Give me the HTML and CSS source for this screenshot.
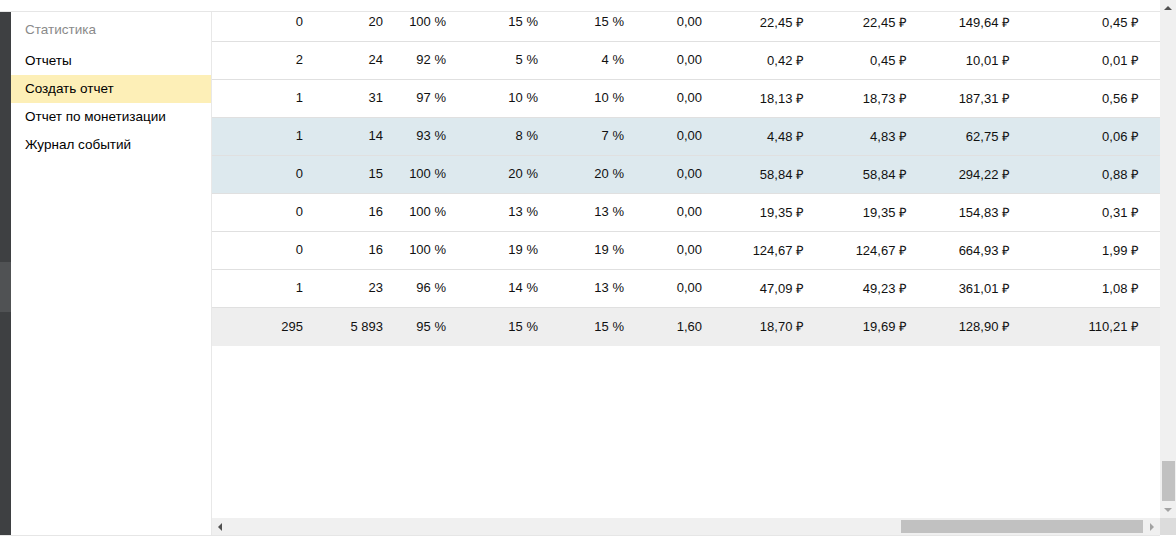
FILE: index.html
```html
<!DOCTYPE html>
<html lang="ru">
<head>
<meta charset="utf-8">
<title>Создать отчет</title>
<link rel="stylesheet" href="styles.css">
</head>
<body>
<div class="page">
  <div class="main">
    <div class="topstrip"></div>
    <div class="body">
      <div class="rail"><div class="rail-thumb"></div></div>
      <nav class="sidebar">
        <div class="side-head">Статистика</div>
        <a class="side-item">Отчеты</a>
        <a class="side-item active">Создать отчет</a>
        <a class="side-item">Отчет по монетизации</a>
        <a class="side-item">Журнал событий</a>
      </nav>
      <div class="grid">
        <div class="viewport">
          <table class="data">
            <colgroup>
              <col class="c1"><col class="c2"><col class="c3"><col class="c4"><col class="c5">
              <col class="c6"><col class="c7"><col class="c8"><col class="c9"><col class="c10">
            </colgroup>
            <tbody>
              <tr><td>0</td><td>20</td><td>100 %</td><td>15 %</td><td>15 %</td><td>0,00</td><td>22,45 ₽</td><td>22,45 ₽</td><td>149,64 ₽</td><td class="last">0,45 ₽</td></tr>
              <tr><td>2</td><td>24</td><td>92 %</td><td>5 %</td><td>4 %</td><td>0,00</td><td>0,42 ₽</td><td>0,45 ₽</td><td>10,01 ₽</td><td class="last">0,01 ₽</td></tr>
              <tr><td>1</td><td>31</td><td>97 %</td><td>10 %</td><td>10 %</td><td>0,00</td><td>18,13 ₽</td><td>18,73 ₽</td><td>187,31 ₽</td><td class="last">0,56 ₽</td></tr>
              <tr class="sel"><td>1</td><td>14</td><td>93 %</td><td>8 %</td><td>7 %</td><td>0,00</td><td>4,48 ₽</td><td>4,83 ₽</td><td>62,75 ₽</td><td class="last">0,06 ₽</td></tr>
              <tr class="sel"><td>0</td><td>15</td><td>100 %</td><td>20 %</td><td>20 %</td><td>0,00</td><td>58,84 ₽</td><td>58,84 ₽</td><td>294,22 ₽</td><td class="last">0,88 ₽</td></tr>
              <tr><td>0</td><td>16</td><td>100 %</td><td>13 %</td><td>13 %</td><td>0,00</td><td>19,35 ₽</td><td>19,35 ₽</td><td>154,83 ₽</td><td class="last">0,31 ₽</td></tr>
              <tr><td>0</td><td>16</td><td>100 %</td><td>19 %</td><td>19 %</td><td>0,00</td><td>124,67 ₽</td><td>124,67 ₽</td><td>664,93 ₽</td><td class="last">1,99 ₽</td></tr>
              <tr><td>1</td><td>23</td><td>96 %</td><td>14 %</td><td>13 %</td><td>0,00</td><td>47,09 ₽</td><td>49,23 ₽</td><td>361,01 ₽</td><td class="last">1,08 ₽</td></tr>
              <tr class="total"><td>295</td><td>5 893</td><td>95 %</td><td>15 %</td><td>15 %</td><td>1,60</td><td>18,70 ₽</td><td>19,69 ₽</td><td>128,90 ₽</td><td class="last">110,21 ₽</td></tr>
            </tbody>
          </table>
        </div>
        <div class="hscroll">
          <div class="sb-btn"><span class="arr arr-left"></span></div>
          <div class="h-track"><div class="h-thumb"></div></div>
          <div class="sb-btn"><span class="arr arr-right dim"></span></div>
        </div>
      </div>
    </div>
    <div class="bottomstrip"></div>
  </div>
  <div class="vscroll">
    <div class="v-btn"><span class="arr arr-up"></span></div>
    <div class="v-track"><div class="v-thumb"></div></div>
    <div class="v-btn"><span class="arr arr-down dim"></span></div>
    <div class="corner"></div>
    <div class="v-rest"></div>
  </div>
</div>
</body>
</html>
```
FILE: styles.css
```css
* { box-sizing: border-box; }
html, body { margin: 0; padding: 0; background: #fff; }
body {
  font-family: "Liberation Sans", Arial, sans-serif;
  font-size: 13px;
  color: #111;
  width: 1176px;
  height: 537px;
  overflow: hidden;
}
.page { display: flex; height: 537px; }
.main { flex: 1; display: flex; flex-direction: column; min-width: 0; }
.topstrip { height: 12px; border-bottom: 1px solid #e6e6e6; background: #fff; }
.body { display: flex; height: 523px; }
.bottomstrip { height: 2px; border-top: 1px solid #e6e6e6; background: #fff; }

.rail { width: 11px; background: #3e4042; padding-top: 250px; }
.rail-thumb { height: 50px; background: #505254; }

.sidebar {
  width: 201px;
  border-right: 1px solid #e8e8e8;
  display: flex;
  flex-direction: column;
  font-size: 13.5px;
}
.side-head {
  padding: 10px 14px;
  line-height: 15px;
  color: #8a8a8a;
}
.side-item {
  height: 28px;
  line-height: 28px;
  padding-left: 14px;
  color: #000;
}
.side-item.active { background: #fdefb7; }

.grid { width: 948px; display: flex; flex-direction: column; }
.viewport { height: 506px; overflow: hidden; }
.data {
  width: 948px;
  table-layout: fixed;
  border-collapse: separate;
  border-spacing: 0;
  margin-top: -8px;
}
.c1 { width: 101px; } .c2 { width: 80px; } .c3 { width: 63px; } .c4 { width: 92px; }
.c5 { width: 86px; } .c6 { width: 78px; } .c7 { width: 102px; } .c8 { width: 103px; }
.c9 { width: 103px; } .c10 { width: 140px; }
.data td {
  height: 38px;
  padding: 0 10px 2px 0;
  text-align: right;
  white-space: nowrap;
  border-bottom: 1px solid #e0e0e0;
  color: #111;
}
.data td.last { padding-right: 21px; }
.data tr.sel td { background: #dde9ee; }
.data tr.total td { background: #eeeeee; border-bottom: none; }

.hscroll { height: 17px; background: #f0f0f0; display: flex; align-items: center; }
.sb-btn { width: 16px; height: 17px; display: flex; align-items: center; justify-content: center; }
.h-track { flex: 1; height: 17px; display: flex; align-items: center; justify-content: flex-end; }
.h-thumb { width: 242px; height: 13px; background: #c1c1c1; margin-right: 1px; }

.vscroll { width: 16px; display: flex; flex-direction: column; }
.v-btn { height: 16px; background: #f0f0f0; display: flex; align-items: center; justify-content: center; }
.v-track { flex: 1; background: #f0f0f0; display: flex; flex-direction: column; justify-content: flex-end; align-items: center; }
.v-thumb { width: 13px; height: 40px; background: #c1c1c1; margin-bottom: 1px; }
.corner { height: 17px; background: #dcdcdc; }
.v-rest { height: 2px; background: #fff; }

.arr { width: 0; height: 0; display: block; }
.arr-up { border-left: 4px solid transparent; border-right: 4px solid transparent; border-bottom: 4px solid #505050; }
.arr-down { border-left: 4px solid transparent; border-right: 4px solid transparent; border-top: 4px solid #505050; }
.arr-left { border-top: 4px solid transparent; border-bottom: 4px solid transparent; border-right: 4px solid #505050; }
.arr-right { border-top: 4px solid transparent; border-bottom: 4px solid transparent; border-left: 4px solid #505050; }
.arr-down.dim { border-top-color: #a3a3a3; }
.arr-right.dim { border-left-color: #a3a3a3; }
```
